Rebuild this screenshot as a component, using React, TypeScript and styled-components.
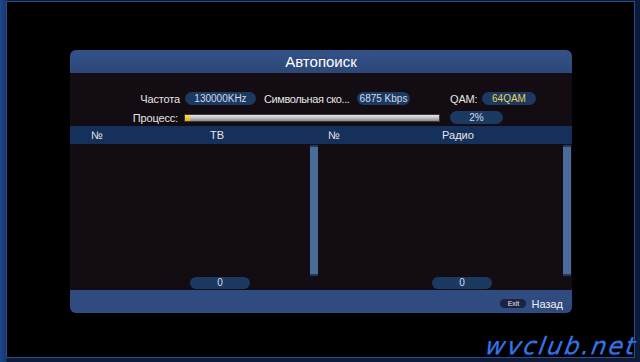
import React from 'react';
import styled, { createGlobalStyle } from 'styled-components';

const GlobalStyle = createGlobalStyle`
  html, body {
    margin: 0;
    padding: 0;
    background: #000;
  }
  * {
    box-sizing: border-box;
  }
`;

const Screen = styled.div`
  position: relative;
  width: 640px;
  height: 362px;
  display: flex;
  padding: 1px 5px 4px 6px;
  background: linear-gradient(90deg, #1d468c 0px, #17386e 6px, #0c1b3c 7px);
  font-family: 'Liberation Sans', Arial, sans-serif;
  overflow: hidden;
`;

const Tv = styled.div`
  flex: 1;
  background: #000;
  border: 1px solid #2b4c86;
  padding: 48px 0 0 63px;
`;

const Dialog = styled.div`
  width: 502px;
  height: 263px;
  display: flex;
  flex-direction: column;
  border-radius: 6px;
  overflow: hidden;
  background: #130d13;
`;

const TitleBar = styled.div`
  height: 23px;
  display: flex;
  align-items: center;
  justify-content: center;
  background: linear-gradient(180deg, #34528a 0%, #2c4677 100%);
  color: #fff;
  font-size: 15px;
`;

const Form = styled.div`
  height: 53px;
  padding-top: 19px;
  display: flex;
  flex-direction: column;
  gap: 6px;
`;

const Row = styled.div`
  height: 13px;
  display: flex;
  align-items: center;
`;

const Label = styled.span<{ $w: number; $ml?: number; $right?: boolean; $tight?: boolean }>`
  flex: none;
  width: ${(p) => p.$w}px;
  margin-left: ${(p) => p.$ml ?? 0}px;
  text-align: ${(p) => (p.$right ? 'right' : 'left')};
  color: #e4e4e4;
  font-size: 11px;
  letter-spacing: ${(p) => (p.$tight ? '-0.4px' : '-0.15px')};
  white-space: nowrap;
`;

const Pill = styled.span<{ $w: number; $ml: number; $gold?: boolean }>`
  flex: none;
  width: ${(p) => p.$w}px;
  margin-left: ${(p) => p.$ml}px;
  height: 13px;
  border-radius: 7px;
  background: #1c3961;
  color: ${(p) => (p.$gold ? '#e8cf52' : '#d2dbea')};
  font-size: 10px;
  line-height: 13px;
  text-align: center;
`;

const Progress = styled.div`
  width: 256px;
  margin-left: 6px;
  height: 8px;
  display: flex;
  background: linear-gradient(180deg, #e6e6e6 0%, #c4c4c4 45%, #8a8a8a 100%);
  border: 1px solid #3a3a3a;
`;

const ProgressFill = styled.div`
  height: 100%;
  background: linear-gradient(180deg, #ffe060 0%, #e8b010 100%);
`;

const Lists = styled.div`
  flex: 1;
  display: grid;
  grid-template-columns: 250px 252px;
`;

const Column = styled.div`
  display: flex;
  flex-direction: column;
`;

const Header = styled.div`
  height: 18px;
  display: flex;
  align-items: center;
  background: #15305a;
  color: #e6e6e6;
  font-size: 11px;
`;

const Cell = styled.div<{ $w?: number; $pl?: number; $pr?: number }>`
  ${(p) => (p.$w ? `width: ${p.$w}px;` : 'flex: 1;')}
  padding-left: ${(p) => p.$pl ?? 0}px;
  padding-right: ${(p) => p.$pr ?? 0}px;
  display: flex;
  justify-content: center;
`;

const ListBody = styled.div`
  flex: 1;
  display: flex;
`;

const ListArea = styled.div`
  flex: 1;
  display: flex;
  align-items: flex-end;
  padding-bottom: 1px;
`;

const Counter = styled.span`
  width: 60px;
  height: 12px;
  border-radius: 6px;
  background: #1c3961;
  color: #d2dbea;
  font-size: 10px;
  line-height: 12px;
  text-align: center;
`;

const Scrollbar = styled.div<{ $mr: number }>`
  width: 8px;
  height: 131px;
  margin: 1px ${(p) => p.$mr}px 0 0;
  background: #4a6c9a;
  border-top: 2px solid #23395c;
  border-bottom: 2px solid #23395c;
`;

const Footer = styled.div`
  height: 23px;
  display: flex;
  align-items: center;
  justify-content: flex-end;
  padding: 4px 9px 0 0;
  gap: 5px;
  background: #2f4b7f;
`;

const KeyCap = styled.span`
  width: 26px;
  height: 9px;
  border-radius: 5px;
  background: #1a2442;
  color: #e8e8e8;
  font-size: 7px;
  line-height: 9px;
  text-align: center;
`;

const FooterText = styled.span`
  color: #f0f0f0;
  font-size: 11px;
`;

const Watermark = styled.div`
  position: absolute;
  right: 3px;
  bottom: 2px;
  font-family: 'DejaVu Sans', sans-serif;
  font-style: italic;
  font-size: 24px;
  letter-spacing: 2px;
  color: #3474e6;
  transform: skewX(-10deg);
  text-shadow: 0 1px 0 #123482;
`;

const progress = 2;

export default function App() {
  return (
    <>
      <GlobalStyle />
      <Screen>
        <Tv>
          <Dialog>
            <TitleBar>Автопоиск</TitleBar>
            <Form>
              <Row>
                <Label $w={110} $right>Частота</Label>
                <Pill $w={71} $ml={5}>130000KHz</Pill>
                <Label $w={87} $ml={8} $tight>Символьная ско...</Label>
                <Pill $w={53} $ml={6}>6875 Kbps</Pill>
                <Label $w={27} $ml={40}>QAM:</Label>
                <Pill $w={54} $ml={5} $gold>64QAM</Pill>
              </Row>
              <Row>
                <Label $w={108} $right>Процесс:</Label>
                <Progress>
                  <ProgressFill style={{ width: `${progress}%` }} />
                </Progress>
                <Pill $w={53} $ml={10}>2%</Pill>
              </Row>
            </Form>
            <Lists>
              <Column>
                <Header>
                  <Cell $w={54}>№</Cell>
                  <Cell $pr={10}>ТВ</Cell>
                </Header>
                <ListBody>
                  <ListArea>
                    <Cell $w={54} />
                    <Cell $pl={6}>
                      <Counter>0</Counter>
                    </Cell>
                  </ListArea>
                  <Scrollbar $mr={2} />
                </ListBody>
              </Column>
              <Column>
                <Header>
                  <Cell $w={28}>№</Cell>
                  <Cell $pr={4}>Радио</Cell>
                </Header>
                <ListBody>
                  <ListArea>
                    <Cell $w={28} />
                    <Cell $pl={13}>
                      <Counter>0</Counter>
                    </Cell>
                  </ListArea>
                  <Scrollbar $mr={1} />
                </ListBody>
              </Column>
            </Lists>
            <Footer>
              <KeyCap>Exit</KeyCap>
              <FooterText>Назад</FooterText>
            </Footer>
          </Dialog>
        </Tv>
        <Watermark>wvclub.net</Watermark>
      </Screen>
    </>
  );
}
